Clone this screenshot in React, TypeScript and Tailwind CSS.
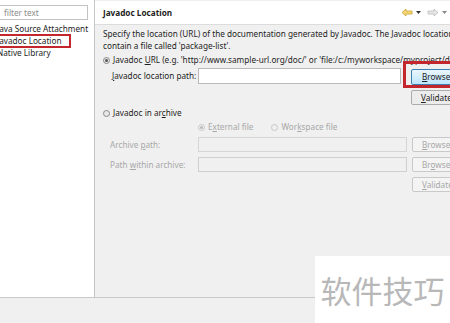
import React from "react";

const U = ({ children }: { children: React.ReactNode }) => <span className="underline underline-offset-[1px]">{children}</span>;

const Radio = ({ checked, disabled }: { checked?: boolean; disabled?: boolean }) => (
  <span
    className={`inline-flex items-center justify-center w-[7px] h-[7px] rounded-full border ${
      disabled ? "border-[#c8c8c8] bg-[#f0f0f0]" : "border-[#8a8a8a] bg-[#e8e8e8]"
    } mr-[3px] shrink-0`}
  >
    {checked && <span className={`w-[3px] h-[3px] rounded-full ${disabled ? "bg-[#b8b8b8]" : "bg-[#555]"}`} />}
  </span>
);

const Btn = ({ children, disabled }: { children: React.ReactNode; disabled?: boolean }) => (
  <div
    className={`w-[66px] h-[15px] flex items-center pl-[9px] border rounded-[2px] ${
      disabled ? "border-[#c9c9c9] bg-[#f4f4f4] text-[#a8a8a8]" : "border-[#acacac] bg-[#ececec] text-[#222]"
    }`}
  >
    {children}
  </div>
);

export default function App() {
  return (
    <div
      className="w-[450px] h-[323px] relative overflow-hidden bg-[#f0f0f0] text-[8.2px] leading-[12px] text-[#1e1e1e]"
      style={{ fontFamily: '"Noto Sans", "Open Sans", sans-serif' }}
    >
      <div className="flex h-[298px] border-b border-[#c9c9c9]">
        {/* Left panel */}
        <div className="w-[95px] shrink-0 bg-white border-r border-[#c6c6c6] overflow-hidden pt-[5px]">
          <div className="-ml-[4px] w-[92px] h-[15px] border border-[#c3c3c3] flex items-center pl-[7px] text-[#8c8c8c]">
            filter text
          </div>
          <div className="mt-[3px] -ml-[3px] whitespace-nowrap">
            <div className="h-[12px] flex items-center">Java Source Attachment</div>
            <div className="h-[12px] flex items-center relative">
              Javadoc Location
              <div className="absolute left-0 -top-[1px] w-[74px] h-[14px] border-[2px] border-[#c4262e]" />
            </div>
            <div className="h-[12px] flex items-center">Native Library</div>
          </div>
        </div>
        {/* Right panel */}
        <div className="flex-1 min-w-0 overflow-hidden">
          <div className="h-[24px] bg-white border-b border-[#dcdcdc] flex items-center pl-[8px] pr-[3px] mt-[1px]">
            <span className="font-bold text-[#222]">Javadoc Location</span>
            <div className="ml-auto flex items-center gap-[3px]">
              <svg width="12" height="9" viewBox="0 0 12 9">
                <path d="M1 4.5 L5 1 L5 3 L11 3 L11 6 L5 6 L5 8 Z" fill="#f7d774" stroke="#c9a230" strokeWidth="0.8" />
              </svg>
              <svg width="5" height="4" viewBox="0 0 5 4"><path d="M0 0 L5 0 L2.5 3 Z" fill="#333" /></svg>
              <svg width="12" height="9" viewBox="0 0 12 9" className="ml-[3px]">
                <path d="M11 4.5 L7 1 L7 3 L1 3 L1 6 L7 6 L7 8 Z" fill="#e6e6e6" stroke="#bdbdbd" strokeWidth="0.8" />
              </svg>
              <svg width="5" height="4" viewBox="0 0 5 4"><path d="M0 0 L5 0 L2.5 3 Z" fill="#888" /></svg>
            </div>
          </div>
          <div className="pl-[8px] pt-[3px] whitespace-nowrap">
            <div className="h-[12px]">Specify the location (URL) of the documentation generated by Javadoc. The Javadoc location must</div>
            <div className="h-[12px]">contain a file called 'package-list'.</div>
            <div className="h-[12px] mt-[2px] flex items-center">
              <Radio checked />
              <span>Javadoc <U>U</U>RL (e.g. 'http://www.sample-url.org/doc/' or 'file:/c:/myworkspace/myproject/doc')</span>
            </div>
            <div className="flex items-start mt-[2px]">
              <div className="pl-[9px] w-[95px] h-[16px] flex items-center shrink-0">
                <span><U>J</U>avadoc location path:</span>
              </div>
              <div className="w-[203px] h-[16px] bg-white border border-[#b9b9b9] shrink-0" />
              <div className="ml-[10px] flex flex-col gap-[5px] shrink-0 mt-[1px]">
                <div className="relative">
                  <div className="absolute -left-[8px] -top-[8px] w-[80px] h-[27px] border-[3px] border-[#c4262e]" />
                  <div className="w-[66px] h-[16px] flex items-center pl-[10px] border border-[#3c7fb1] rounded-[2px] bg-gradient-to-b from-[#eaf6fd] to-[#bee6fd] text-[#222]">
                    <span><U>B</U>rowse...</span>
                  </div>
                </div>
                <Btn>
                  <span><U>V</U>alidate...</span>
                </Btn>
              </div>
            </div>
            <div className="h-[12px] mt-[2px] flex items-center">
              <Radio />
              <span>Javadoc in ar<U>c</U>hive</span>
            </div>
            <div className="h-[12px] mt-[2px] flex items-center pl-[95px] text-[#a8a8a8]">
              <Radio checked disabled />
              <span>E<U>x</U>ternal file</span>
              <span className="ml-[18px] flex items-center">
                <Radio disabled />
                <span>Wor<U>k</U>space file</span>
              </span>
            </div>
            <div className="flex items-center mt-[4px] text-[#a8a8a8]">
              <div className="pl-[7px] w-[95px] shrink-0">
                Archive <U>p</U>ath:
              </div>
              <div className="w-[209px] h-[15px] border border-[#d6d6d6] bg-[#f0f0f0] shrink-0" />
              <div className="ml-[5px] shrink-0">
                <Btn disabled>
                  <span><U>B</U>rowse...</span>
                </Btn>
              </div>
            </div>
            <div className="flex items-center mt-[5px] text-[#a8a8a8]">
              <div className="pl-[7px] w-[95px] shrink-0">
                Path <U>w</U>ithin archive:
              </div>
              <div className="w-[209px] h-[15px] border border-[#cfcfcf] bg-[#f0f0f0] shrink-0" />
              <div className="ml-[5px] shrink-0">
                <Btn disabled>
                  <span>Br<U>o</U>wse...</span>
                </Btn>
              </div>
            </div>
            <div className="flex mt-[5px] pl-[309px]">
              <Btn disabled>
                <span><U>V</U>alidate...</span>
              </Btn>
            </div>
          </div>
        </div>
      </div>
      {/* watermark */}
      <div
        className="absolute left-[315px] top-[256px] w-[135px] h-[67px] bg-white flex items-center justify-center text-[31px] leading-none text-[#b8b8b8]"
        style={{ fontFamily: '"Noto Sans CJK SC", sans-serif' }}
      >
        软件技巧
      </div>
    </div>
  );
}
